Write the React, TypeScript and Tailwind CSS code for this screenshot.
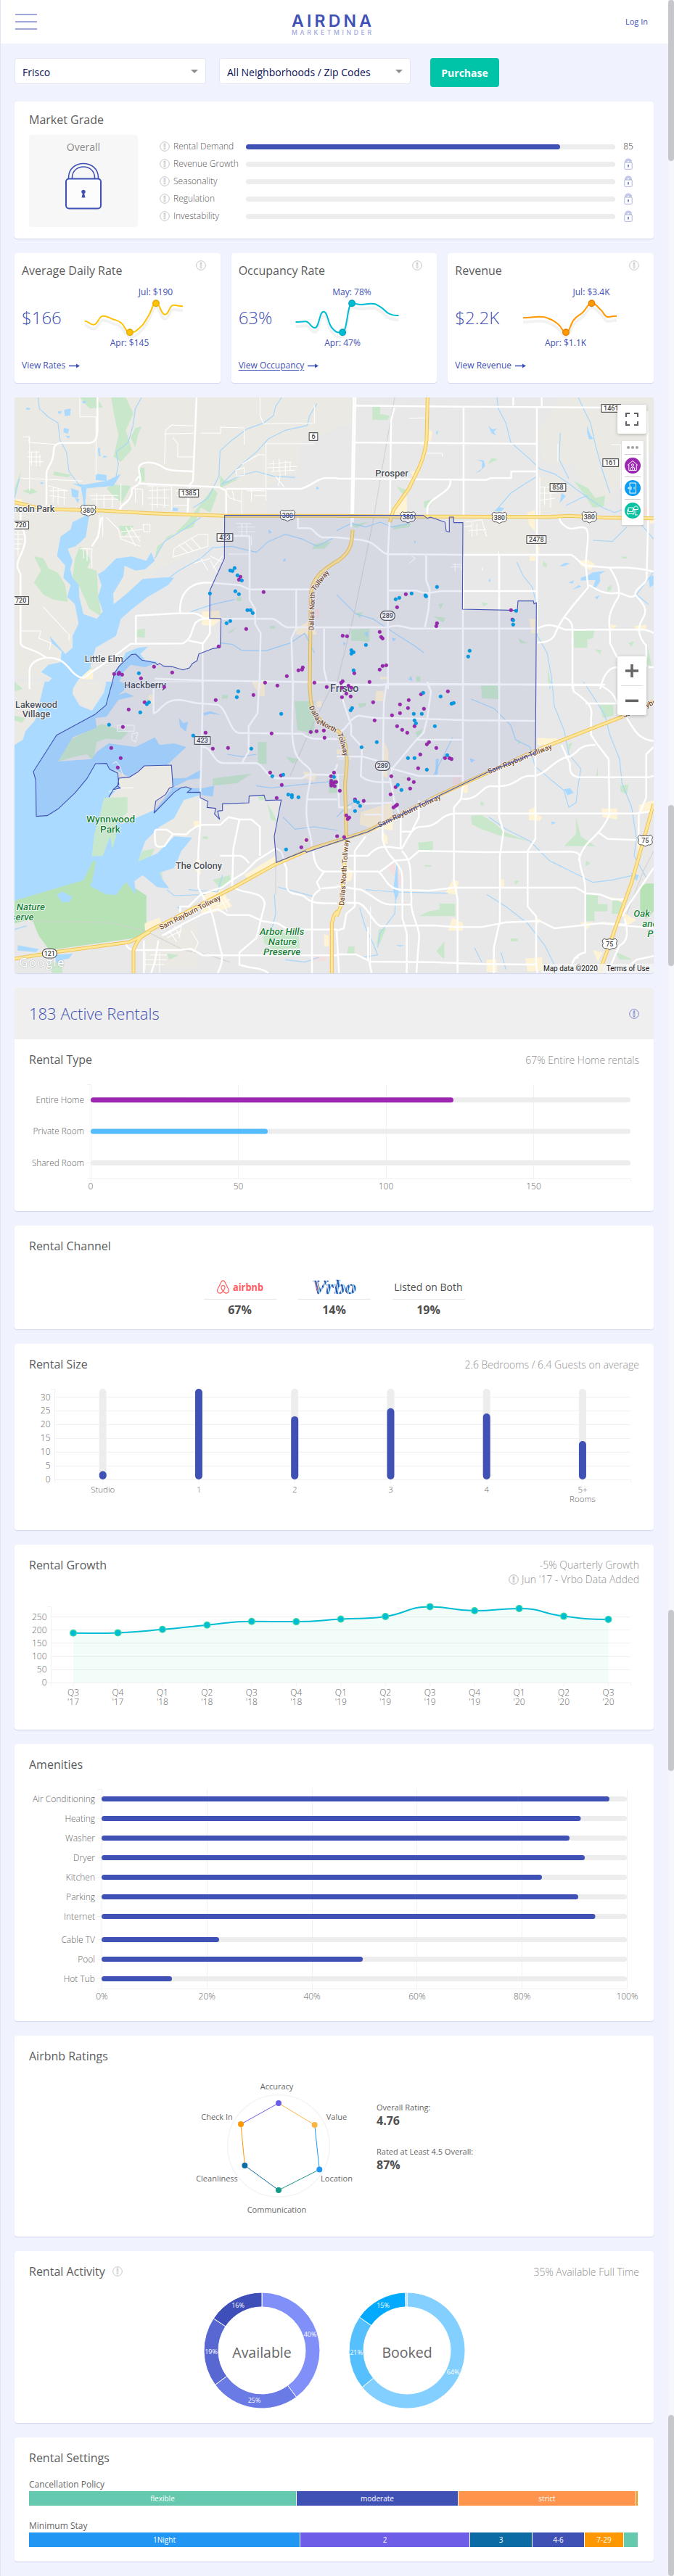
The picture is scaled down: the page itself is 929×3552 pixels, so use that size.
import React from "react";
import { FaAirbnb } from "react-icons/fa";

type Anchor = "start" | "middle" | "end";

function Info({ className = "text-[#c4c4c4]", size = 14 }: { className?: string; size?: number }) {
  return (
    <svg width={size} height={size} viewBox="0 0 14 14" className={className} fill="none" stroke="currentColor">
      <circle cx="7" cy="7" r="6.3" strokeWidth="1" />
      <rect x="6.1" y="5.7" width="1.8" height="5" strokeWidth="0.8" />
      <rect x="6.1" y="3.1" width="1.8" height="1.4" strokeWidth="0.8" />
    </svg>
  );
}

function Card({ className = "", children }: { className?: string; children: React.ReactNode }) {
  return (
    <section className={"flex flex-col overflow-hidden rounded bg-white shadow-[0_1px_1px_#cfd6f0] " + className}>
      {children}
    </section>
  );
}

function CardHeader({ title, note, info }: { title: string; note?: string; info?: boolean }) {
  return (
    <div className="flex h-[56px] shrink-0 items-center justify-between px-5">
      <h2 className="flex items-center gap-[10px] text-[16px] text-[#5c5c5c]">
        {title}
        {info && <Info />}
      </h2>
      {note && <span className="text-[14px] font-light text-[#8f8f8f]">{note}</span>}
    </div>
  );
}

function Label({ x, y, anchor = "middle", size = 12, className = "fill-[#666666] font-light", children }: { x: number; y: number; anchor?: Anchor; size?: number; className?: string; children: React.ReactNode }) {
  return (
    <text x={x} y={y} dy=".35em" textAnchor={anchor} fontSize={size} className={className}>
      {children}
    </text>
  );
}

/* ---------- header ---------- */

function Header() {
  return (
    <header className="flex h-[60px] items-center justify-between bg-white pl-5 pr-[28px]">
      <div className="flex w-[30px] flex-col gap-[8px]">
        <span className="h-[2px] bg-[#9fa8da]" />
        <span className="h-[2px] bg-[#9fa8da]" />
        <span className="h-[2px] bg-[#9fa8da]" />
      </div>
      <svg width="112" height="40" viewBox="0 -6 112 40" className="ml-[1px] mt-[2px] overflow-visible">
        <text x="1" y="20" textLength="110" lengthAdjust="spacing" fontSize="23" className="fill-[#3f51b5] font-semibold" fontFamily="Inter">AIRDNA</text>
        <text x="1" y="31" textLength="110" lengthAdjust="spacing" fontSize="8.6" className="fill-[#9fa8da] font-medium" fontFamily="Inter">MARKETMINDER</text>
      </svg>
      <a className="text-[11px] text-[#3f51b5]">Log In</a>
    </header>
  );
}

function Select({ text }: { text: string }) {
  return (
    <div className="flex h-[36px] w-[264px] items-center justify-between rounded border border-[#e3e6f3] bg-white pl-[10px] pr-[10px]">
      <span className="pt-[3px] text-[14px] text-[#0b1156]">{text}</span>
      <svg width="10" height="5" viewBox="0 0 10 5"><path d="M0 0H10L5 5Z" fill="#8f8f8f" /></svg>
    </div>
  );
}

/* ---------- market grade ---------- */

function SmallLock() {
  return (
    <svg width="12" height="16" viewBox="0 0 12 16" fill="none" stroke="#aeb6de">
      <path d="M1.5 6V4.8C1.5 -.3 10.500 -.3 10.500 4.800V6H7.800V5C7.800 2.500 4.200 2.500 4.200 5V6Z" fill="#c9cfea" strokeWidth=".8" />
      <rect x=".8" y="6" width="10.400" height="9.300" rx=".8" fill="white" />
      <path d="M6 9V12.500" stroke="#5363bd" strokeWidth="1.500" />
    </svg>
  );
}

function MarketGrade() {
  const rows = ["Rental Demand", "Revenue Growth", "Seasonality", "Regulation", "Investability"];
  return (
    <Card className="h-[189px]">
      <div className="flex h-[46px] items-end px-5 pb-[9px] text-[16px] leading-[24px] text-[#5c5c5c]">Market Grade</div>
      <div className="flex pl-5">
        <div className="flex h-[127px] w-[150px] flex-col items-center rounded bg-[#f7f7f7]">
          <span className="mt-[7px] text-[14px] leading-[20px] text-[#8a8a8a]">Overall</span>
          <svg width="52" height="66" viewBox="0 0 52 66" className="mt-[11px]" fill="none" stroke="#3f51b5" strokeWidth="2">
            <path d="M5.500 23V21C5.500 -5 46.500 -5 46.500 21V23M10.500 23V21C10.500 1 41.500 1 41.500 21V23" strokeWidth="1.600" />
            <rect x="2" y="22.500" width="48" height="41" rx="4" fill="#fcfcfc" />
            <path d="M23.500 48.500L24.800 43A2.800 2.800 0 1 1 27.200 43L28.500 48.500Z" fill="#3f51b5" stroke="none" />
          </svg>
        </div>
        <div className="ml-[30px] mt-[4px] flex flex-col">
          {rows.map((r, i) => (
            <div key={r} className="flex h-[24px] items-center">
              <Info />
              <span className="ml-[5px] w-[100px] text-[12px] font-light text-[#555555]">{r}</span>
              <div className="h-[7px] w-[509px] rounded-full bg-[#ededed]">
                {i === 0 && <div className="h-[7px] w-[433px] rounded-full bg-[#3f51b5]" />}
              </div>
              <div className="ml-[11px] flex w-[14px] justify-center text-[12px] font-light text-[#444444]">
                {i === 0 ? "85" : <SmallLock />}
              </div>
            </div>
          ))}
        </div>
      </div>
    </Card>
  );
}

/* ---------- metric cards ---------- */

function smooth(p: number[][]) {
  let d = `M${p[0][0]} ${p[0][1]}`;
  for (let i = 0; i < p.length - 1; i++) {
    const m = (p[i][0] + p[i + 1][0]) / 2;
    const a = p[i - 1] || p[i];
    const b = p[i];
    const c = p[i + 1];
    const e = p[i + 2] || c;
    const t1 = (b[1] - a[1]) * (c[1] - b[1]) > 0 ? (c[1] - a[1]) / (c[0] - a[0] || 1) : 0;
    const t2 = (c[1] - b[1]) * (e[1] - c[1]) > 0 ? (e[1] - b[1]) / (e[0] - b[0] || 1) : 0;
    d += `C${m} ${b[1] + t1 * (m - b[0])} ${m} ${c[1] - t2 * (c[0] - m)} ${c[0]} ${c[1]}`;
  }
  return d;
}

interface Metric {
  title: string; value: string; link: string; underline?: boolean; color: string; ring: string;
  pts: number[][]; lo: [number, number, string, number]; hi: [number, number, string, number]; origin: number;
}

const metrics: Metric[] = [
  {
    title: "Average Daily Rate", value: "$166", link: "View Rates", color: "#ffc107", ring: "#e0a800", origin: 20,
    pts: [[116.7, 441.7], [129, 446.700], [142, 434.700], [155, 439], [167, 444.300], [179, 457.300], [193.700, 450], [204.400, 435], [215, 417.300], [227.500, 432.700], [239, 419.700], [252, 421.300]],
    lo: [179, 457.3, "Apr: $145", 178.5], hi: [215, 417.3, "Jul: $190", 214.5],
  },
  {
    title: "Occupancy Rate", value: "63%", link: "View Occupancy", underline: true, color: "#00bcd4", ring: "#00a3b8", origin: 318.5,
    pts: [[407, 443], [420.600, 442.300], [433.600, 451], [445.500, 428.700], [457, 451], [471.600, 457.300], [484.600, 417.300], [497.600, 419], [511, 417.700], [524, 422.300], [536, 431.700], [549, 434]],
    lo: [471.6, 457.3, "Apr: 47%", 471.5], hi: [484.6, 417.3, "May: 78%", 484.5],
  },
  {
    title: "Revenue", value: "$2.2K", link: "View Revenue", color: "#ff9800", ring: "#e08000", origin: 617,
    pts: [[721, 437.300], [743.500, 435.700], [758, 439], [770, 446.700], [780, 457.300], [791, 440], [803, 430], [816, 417.300], [827.600, 425.700], [838, 436], [850, 434.700]],
    lo: [780, 457.3, "Apr: $1.1K", 779.5], hi: [815.500, 417.3, "Jul: $3.4K", 815],
  },
];

function MetricCard({ m }: { m: Metric }) {
  return (
    <Card className="h-[179px] flex-1">
      <div className="flex items-start justify-between pl-[10px] pr-5 pt-[10px]">
        <h2 className="pt-[2px] text-[16px] leading-[24px] text-[#5c5c5c]">{m.title}</h2>
        <Info />
      </div>
      <div className="flex h-[106px] pl-[10px]">
        <span className="w-[70px] pt-[37px] text-[24px] font-light leading-[32px] text-[#3f51b5]">{m.value}</span>
        <svg width="203" height="106" viewBox={`${m.origin + 80} 384 203 106`} className="shrink-0">
          <path d={smooth(m.pts)} transform="translate(0 6)" fill="none" stroke="#000000" strokeOpacity=".05" strokeWidth="4" />
          <path d={smooth(m.pts)} fill="none" stroke={m.color} strokeWidth="2" />
          {[m.lo, m.hi].map((p) => (
            <circle key={p[2]} cx={p[0]} cy={p[1]} r="4.300" fill={m.color} stroke={m.ring} strokeWidth="1.300" />
          ))}
          <Label x={m.hi[3]} y={402} size={12} className="fill-[#3f51b5]">{m.hi[2]}</Label>
          <Label x={m.lo[3]} y={472} size={12} className="fill-[#3f51b5]">{m.lo[2]}</Label>
        </svg>
      </div>
      <div className="flex items-center gap-[5px] pl-[10px] pt-[5px] text-[12px] leading-[16px] text-[#3f51b5]">
        <span className={m.underline ? "underline underline-offset-2" : ""}>{m.link}</span>
        <svg width="15" height="7" viewBox="0 0 15 7"><path d="M0 3.500H11" stroke="#3f51b5" strokeWidth="1.600" /><path d="M10 .5L15 3.500L10 6.500Z" fill="#3f51b5" /></svg>
      </div>
    </Card>
  );
}

/* ---------- map ---------- */
/* Tile space is three units per pixel; each quarter of the map has its own offset. */

type Quarters = [string, string, string, string];
const offsets = ["translate(0 0)", "translate(1392 0)", "translate(0 1200)", "translate(1392 1200)"];

function Layer({ q, ...rest }: { q: Quarters } & React.SVGProps<SVGPathElement>) {
  return (
    <>
      {q.map((d, i) => (
        <path key={i} d={d} transform={offsets[i]} {...rest} />
      ))}
    </>
  );
}

const tan: Quarters = [
  "M60 24H1395V150L1240 215V320L1100 390V510H930L925 560 860 640 640 740 560 870 470 960 400 1060 330 1180H60Z",
  "M0 24H60V140H0ZM930 24H1311V240L1200 300 1130 450 1060 460 980 300 860 300 830 170ZM530 520H800V670H530ZM840 350H930V520H840Z",
  "M60 0H430L380 120 300 60 240 150 60 262ZM470 350L597 348 709 345 715 435 640 540 530 560 430 480ZM640 520L750 460 820 500V600L640 760ZM600 1020L700 1050 820 980V1180H600Z",
  "",
];

const water: Quarters = [
  "M300 380L335 395 345 460 350 515 300 540 292 570 250 600 236 680 270 720 262 770 292 800 278 850 310 880 325 960 300 1010 300 1060 270 1085 205 1010 215 1040 255 1075 250 1120 200 1130 170 1160 215 1185 175 1230H300L325 1190 370 1150 395 1060 480 1010 500 940 545 900 610 850 695 800 720 770 690 768 590 775 530 830 470 880 468 835 510 765 515 720 560 740 600 735 640 700 625 665 605 700 545 682 480 690 430 740 405 755 420 800 405 850 425 910 400 940 345 920 328 850 326 800 300 770 290 735 300 700 280 650 312 640 330 625 355 600 368 515 352 460 358 400 470 390 500 340 480 350 440 370 350 385ZM457 1230L473 1165 493 1135 520 1080 570 1060 612 1055 580 1085 600 1110 655 1118 600 1140 540 1130 510 1160 480 1230ZM265 75L292 70 290 98 268 102ZM240 82L254 80 252 92 241 90ZM108 66L126 68 122 76 108 74ZM342 38L356 40 352 50 340 46ZM264 150L286 155 280 175 262 168ZM270 182L290 184 284 194ZM405 235L412 232 416 268 408 266ZM398 340L440 345 442 370 395 365ZM294 400L326 410 322 440 298 435ZM310 440L328 444 322 462ZM430 264L446 270 424 274ZM166 372L182 378 170 384ZM1110 570L1124 582 1112 588ZM1170 695L1184 690 1176 706ZM1308 392L1322 400 1308 406ZM714 480L738 482 734 494 714 494Z",
  "M628 140L642 156 664 152 650 166 660 182 640 172ZM575 335L600 320 602 290 580 282 608 284 614 308 592 330ZM1035 140L1050 180 1062 196 1044 198 1036 172ZM930 420L948 432 922 462ZM650 495L672 478 694 482 680 496ZM922 722L944 708 966 710 940 722ZM1010 770L1040 760 1060 748 1088 744 1112 742 1088 756 1090 785 1072 810 1058 818 1070 780 1040 780 1010 782ZM958 790L982 780 976 794ZM975 820L1000 800 1012 806ZM1068 850L1088 842 1076 860ZM1290 770L1310 760V800L1295 810ZM228 1018L246 1022 234 1034ZM114 1000L130 990 128 1016ZM26 1036L38 1040 30 1052ZM628 780L638 772 634 790ZM296 1192L308 1176 314 1196ZM320 616L328 622 322 630ZM410 168L420 160 416 180Z",
  "M185 0L170 60 145 160 105 205 95 240 60 262V905L350 820 372 845 440 880 480 882 520 828 562 880 556 825 590 800 650 850 700 855 670 815 660 790 720 770 750 700 795 645 720 640 650 710 570 745 600 660 660 600 720 565 760 490 830 468 880 475 886 430 840 440 790 440 750 438 716 437 780 405 830 400 834 362 770 398 716 400 690 345 770 270 720 255 660 262 640 230 560 270 450 255 400 290 380 320 240 330 300 230 400 190 395 150 440 145 490 75 555 60 520 45 490 55 530 20 500 0H440L430 45 380 120 330 100 300 50 305 0ZM740 150L758 172 778 165 768 206 744 186ZM840 130L870 122 915 138 870 132 846 140ZM74 1090L160 1106 150 1118 72 1112ZM225 1130L300 1125 285 1145 260 1150 250 1170 225 1155ZM730 935L750 925 745 940ZM235 880L260 870 298 890 285 912 255 910Z",
  "M410 320L422 318 418 380 408 390ZM550 315L572 325 556 335ZM888 578L908 582 890 592ZM234 860L250 740 256 880 244 905ZM940 445L965 440 980 460 955 470ZM1215 790L1250 800 1262 770 1240 825ZM245 1090L280 1090 260 1096Z",
];

const streams: Quarters = [
  "M158 24L163 70 200 105 240 130 248 200 275 250 285 330 330 390M585 24L560 70 550 140 530 210 480 250 490 300 480 350M1165 24L1140 60 1130 100 1090 130 1020 155 960 200 910 245 905 350 860 440 800 480M1310 50L1280 100 1270 140 1180 160 1110 195 1060 250 1000 300 915 385M915 385L1000 345 1060 330 1130 350 1220 355M640 690L680 620 760 570 830 520M700 770L740 740 830 690 880 645 960 640 1060 665 1110 620 1180 590 1250 610 1310 640 1390 600M790 910L880 880 970 860M912 1040L960 1045 1000 1070 1100 1072 1200 1040 1260 1000 1300 1080M60 440L80 360",
  "M0 575L60 545 120 560 180 540 230 560 300 545M663 24L668 70 700 130 720 210 800 280 840 320 900 340 960 380 1040 440 1100 480 1150 500 1200 480 1311 610M1000 24L1020 70 1050 130 1070 220 1100 330 1130 420M660 490L720 420 780 380 830 350M925 170L920 280 960 360M950 470L1010 440 1040 430M745 705L770 760 810 810 830 900 830 1010 870 1080 890 1190 880 1230M0 840L80 920 150 940 240 1000 320 1050 360 1080M1060 615L1140 620 1200 560M1311 745L1240 840 1290 880",
  "M940 300L1000 310 1060 300M1060 430L1120 440 1200 430 1395 410M1170 560L1220 610 1300 600 1395 615M1135 880L1140 960 1120 1040M1150 850L1230 870 1300 890M780 860L900 870 920 800M1180 1150L1260 1160 1320 1140M60 1025L110 1010M850 880L720 885 690 860",
  "M556 72L650 110 720 180 740 240 800 270 820 350 880 400 940 450 960 520 990 500 1000 420 1010 360 960 300 940 200 900 100 890 0M1020 0L1060 60 1110 140 1130 220 1170 320 1180 420 1220 520 1240 650 1230 720 1280 810M630 560L700 610 800 660 880 740 960 780 1060 830 1140 820 1230 800M620 880L700 930 790 1000 860 1090 905 1180M245 880L240 960 180 1040 170 1100M120 860L240 870 460 875M95 935L120 1020 150 1080 170 1130 110 1140M0 560L50 510 80 495M400 390L440 310 480 230M570 1100L600 1160M680 1120L700 1190",
];

const parks: Quarters = [
  "M330 24H400L425 65 370 70ZM460 24H520L552 90 520 160 545 240 500 290 470 270 490 180 470 90ZM560 150L585 145 570 180 560 230 540 190ZM575 315H598V372L570 365ZM470 385L540 390 530 410 505 460 478 440 440 400ZM94 410L130 400 155 415 125 425ZM90 320L60 400V430L78 370ZM140 680L180 690 200 730 240 750 270 800 280 870 220 860 180 840 140 790 170 740ZM330 640L355 660 375 700 360 730 400 740 405 830 420 930 370 900 330 810 300 770 310 690ZM570 985L600 980 598 1018 562 1015ZM880 400L900 420 870 500 830 480 800 560 740 580 690 600 640 690 650 640 720 590 770 540ZM980 850H998V866H978ZM1300 630L1370 620 1340 650 1290 650ZM910 345L930 370 990 360 910 400ZM940 1000L975 975 960 995ZM1115 970H1138V980H1115ZM340 1185L380 1145 360 1120 340 1130ZM225 330L295 345 280 355 220 345ZM490 555H555L510 600Z",
  "M148 62H180V92L220 100 210 118 148 116ZM248 392L285 405 275 428ZM360 455L410 440 380 480 362 482ZM625 300L640 275 668 280ZM980 370L1040 400 1070 440 1110 430 1105 475 1060 480 1020 420ZM60 985L136 980V1034L60 1030ZM980 990L1066 988 1060 1020 1036 1025V1060H982ZM1120 810L1138 798 1134 822 1120 828ZM855 700L870 715 866 728 852 720ZM600 870L628 878 606 888ZM400 930L450 935 440 955ZM420 880L442 875 430 900ZM230 555L310 545 300 560 236 570ZM60 550L130 540 80 565ZM1066 1066L1095 1068 1090 1086ZM1205 1040L1230 1032 1220 1055ZM1285 1050L1303 1135 1285 1130ZM750 1020L790 1040 760 1040ZM328 1178H346V1200H330ZM872 1140L885 1200 875 1210ZM80 915L108 912 96 938ZM598 1216H668V1230H598ZM1180 682H1200V690H1180Z",
  "M60 905L350 820 385 740 397 745 380 830 372 845 440 880 520 828 605 885V1020L590 1055 205 1110 160 1050 132 980 60 1000ZM430 480L527 478V540L470 600 480 640 465 690 455 640 425 720 380 722 390 630 410 560ZM240 330L290 240 420 175 530 210 500 240 440 235 400 250 385 330 360 300 310 310ZM1218 80H1300V215L1230 200ZM1066 250H1102V340H1066ZM880 820L950 800 955 825 910 855ZM1090 1020L1235 1050 1240 1100 1130 1110 1090 1080ZM1105 500L1148 580 1120 570ZM560 755L590 700 640 690 620 730ZM630 770L670 790 675 830ZM60 0L95 30 60 40ZM60 140L105 150 90 170 60 160ZM205 1160H258V1205H215ZM880 400L1040 380 980 420 880 430ZM1180 310L1240 320 1210 340ZM1360 400H1395V460H1360ZM838 640H860V650H838ZM690 1125L740 1130 700 1150ZM1070 475H1095V490H1070ZM918 55H942V70H918Z",
  "M598 14H670V72L600 68ZM555 555L600 552 660 590 690 620 740 640 800 660 670 635 600 610 560 590ZM990 560L1010 640 1070 680 940 680 990 630ZM338 665L398 660V698H340ZM425 918H490V970H340L380 950 425 942ZM1032 880L1080 885V920L1120 920V950H1066V990H1030ZM1140 905H1180V960L1138 960ZM1088 95H1145V140L1100 150ZM1172 430L1208 425 1200 465 1175 455ZM175 1025L205 1020 180 1080 165 1090ZM445 1075V1150L412 1115ZM50 1095H74V1125H42ZM720 1062H748V1074H720ZM325 210L356 195 340 240ZM88 90L122 88 120 100 95 110ZM1080 350V390H1072ZM955 260L975 250 960 290ZM750 240L762 250 750 260ZM1030 740L1050 750 1030 765ZM735 825L755 822 740 840ZM364 758H390V766H364ZM595 498H608V512H595ZM1150 1115L1225 1150 1170 1150ZM265 395L310 398 300 405Z",
];

const deepPark: Quarters = ["", "", "M60 905L350 820 372 845 440 880 520 828 605 885V1020L590 1055 205 1110 160 1050 132 980 60 1000Z", "M1255 850L1280 835H1311V950L1280 980 1255 960Z"];

const town: Quarters = [
  "M836 910L905 905 915 940 880 970 835 965ZM1225 980L1290 940 1310 1005H1225ZM340 1150H385V1190H340ZM65 445H90V465H65Z",
  "M378 155L395 165 390 205 345 225 370 190ZM245 460L290 430 292 512H210ZM790 500L820 488V578L795 550ZM1000 700L1040 695 1068 715 1050 738 1010 720ZM798 680H822V700H798ZM796 940H822V1000H805ZM1130 962L1160 968 1140 985ZM1230 970L1280 965V985H1240ZM828 640H838V670H828ZM305 330H345L320 360ZM180 1180H210V1190H180ZM1295 520H1311V545H1295Z",
  "M1040 0H1095V60H1075ZM1255 370L1310 380 1300 412 1258 400ZM802 575H830V600H802ZM812 730L830 740V800L808 780ZM1010 800L1140 720 1150 750 1030 820ZM840 880L920 860 960 930 900 950 830 960ZM598 1000L660 975 670 1010 600 1040ZM1340 1045L1360 1050V1095H1340ZM1256 645H1275V665H1256ZM1310 80H1330V105H1310ZM615 55H632V90H615Z",
  "M100 540L225 500 235 560 170 615 95 590ZM195 240L215 290 210 400 190 390ZM200 540L235 560 230 615 195 610ZM162 38H195V80H160ZM830 232L915 235 900 265 830 262ZM522 425H542V460H525ZM795 530L820 520V545L850 560 840 575 795 572ZM1095 525H1160V570L1100 560ZM1250 510L1311 490V540H1250ZM480 820L505 825 495 880 450 875ZM675 815L692 820V850H675ZM480 975L500 990 522 995V1030H460ZM620 1150L660 1148 665 1200H620ZM780 1145L850 1140V1195L790 1200ZM1005 995H1060L1035 1025ZM1180 955L1210 970 1240 985 1200 1010ZM1130 890L1185 900V915ZM1240 660L1260 665 1250 740ZM820 975L845 985 830 1005ZM40 760L66 790 60 820 40 830ZM190 620L210 640V670H195ZM1060 1110L1100 1120 1080 1160ZM0 280H50V300H0Z",
];

const pinkLand: Quarters = [
  "M1300 900H1320V935H1300Z",
  "M1270 478H1295V510H1270Z",
  "M1290 1130H1350V1155H1290Z",
  "M205 760L235 750 255 790 240 805ZM255 795H270V840H255ZM480 395L513 390 510 420 480 435ZM275 912H290V922H275Z",
];

const minor: Quarters = [
  "M330 24V104H397V345M122 185V410M95 187H120V210L230 218M116 250H165M112 270H170M120 290H180M130 250V305M150 245V310M165 260V310M88 358L340 370M200 390L280 410M205 410H280M205 430L275 440M220 395V460M240 400V465M265 405V470M370 430H490M380 445H490M400 420V475M430 425V480M465 430V480M540 400L590 405V470M560 400V460M610 390H710V490M630 390V490M650 395V480M680 400V480M615 410L705 405M610 440H700M620 465L700 470M725 410H775V470H720M730 430H775M925 400L950 440 1000 455M960 410L970 450M1000 405V510M1040 405V455M1020 410H1100V450M1050 430H1100M1100 400V215H1300M1010 155V220M1075 24V100L1090 133 1300 130V55M680 300L685 160 710 138 800 142M680 175L800 172M715 190L735 215 735 270H800M830 172H912V147L1010 150M1110 300L1205 290M1105 315L1230 310M1120 330L1220 325M1130 285V330M1155 280V335M1180 285V345M1200 290V330M1140 350L1175 395M1160 340L1150 390M975 325L1010 315V345L980 350ZM1000 300L1070 260 1098 262M410 510V590M425 515V600M440 520L490 570 500 610 580 640M500 580L590 570M520 560L560 640M540 560L580 620M500 600L580 600M592 550H620V580H595ZM330 650H380V730M345 650V690M360 650V700M720 650L820 590H860V640L715 685ZM740 635L780 670M760 620L800 660M790 605L830 650M800 710L870 690M830 690L860 740M870 680L930 710M880 730L920 680M870 700L900 750M975 545H1040M980 560H1055M985 580H1055M1000 545V595M1020 545V590M1040 600V635M945 672H1030M178 890L280 1000M90 990H170L160 1020 210 1040 205 1070M65 575H100M60 590H95M60 610H95M60 630H90M60 650H85M75 580V680M285 1000V1030M500 380V490",
  "M300 110L365 108M370 255H437V270M525 560L560 555M530 540L600 530 620 600M545 575L620 570M560 540V600M580 545V595M840 395H905M835 420H910M840 450L905 440M860 395V470M885 390V480M840 355V510M480 715H515V740M470 725H510M490 710V745M310 680L325 690 300 710M670 660V680M602 730V740M1135 220H1175V400M915 215V290",
  "M500 0V0M640 0H835M545 215L570 210 560 250 545 240ZM485 180H555V205H485ZM465 340L480 330 495 350 510 390M450 455L500 440 553 438M660 1120V1205M600 1120V1190M620 1130H690M600 1150H690M600 1170H680M680 1050L750 1010 740 1060M700 1030L730 1075M720 1010L745 1055M690 1060L750 1030M790 1030L820 1080 800 1120M915 900L940 950M925 890L950 930M900 930L950 900",
  "M0 385H30M5 320H60M140 930V1200",
];

const rail: Quarters = ["", "M240 24L200 250 150 540 70 930 0 1210", "M132 990L450 996 600 1030 760 1110 860 1130 950 1160M1140 720V880M1380 0L1260 250 1200 390", "M1311 700L1270 780 1200 960"];

const roads: Quarters = [
  "M403 24V160Q402 212 370 212H250Q222 215 222 245C222 300 192 310 192 340V470M813 24L798 370L785 385L775 505M495 490C500 460 530 470 545 420C540 390 560 400 575 380C590 360 570 340 575 310C590 285 640 290 670 310C700 335 760 325 800 330M570 380L905 395L935 410V512M560 370L575 350M935 402H1245C1290 390 1310 360 1345 358H1395M85 500V540C120 620 100 640 75 700C65 740 85 740 85 760V1040C90 1065 140 1060 190 1100C240 1100 260 1110 300 1160C330 1190 350 1190 370 1165C440 1120 480 1090 540 1043L755 1042C800 1020 790 980 810 955Q830 935 868 940M122 1230V1150Q130 1110 190 1100M562 1040V927L730 917H800C830 915 840 950 868 935M745 915C740 850 770 790 860 790L990 800L1030 818H1290M868 935V1000Q850 1030 838 1042V1230M780 1030L838 1042M1395 603H1330C1290 580 1300 565 1270 565H1232V515M1395 975H1185C1150 960 1150 940 1120 940H915M1032 595V860L1055 900V960L1078 1000L1072 1230M1225 820V980L1205 1020L1212 1230M1340 980V1150L1352 1200M1350 975H1395M640 1187L838 1195L1395 1203M955 597H1032M380 640L405 600 420 520",
  "M70 24L60 560M78 24L68 540M70 58L500 62L1110 66M730 24V58M848 24V60M76 210L830 216M240 60L225 120 220 500M0 360L620 365L635 358H722V330H825M525 60V520M470 365C480 420 390 430 375 480V510M828 66V1000M0 603C60 610 120 610 150 630C190 660 190 670 215 672L520 675H970C1000 690 1000 710 1030 720M220 510L212 670V970M215 823H330C370 840 400 830 430 825H825M370 675V780L385 820 380 900 365 975M0 975H210C260 960 280 975 310 980H830C870 960 890 965 920 975L945 985H1270Q1300 990 1311 1000M522 675V1210M672 675V1230M212 970V1230M0 1212H1110M830 1038Q880 1040 900 1010C930 930 1000 860 1040 810L1030 720C1030 670 1050 580 1030 565C1000 550 980 580 950 560Q920 540 922 520M1030 720L1130 728C1200 725 1260 730 1311 745M1130 730C1170 790 1170 830 1165 850C1120 920 1125 950 1130 985V1040L1160 1100M1045 800C1090 830 1120 840 1165 832C1200 840 1220 860 1235 840C1230 810 1290 800 1282 760L1288 540 1285 80M1235 840C1270 880 1290 900 1265 940C1240 980 1250 1020 1280 1050V1140M945 935Q975 950 975 980V1230M1311 1140H1290M1090 1230Q1110 1140 1160 1140M375 1210L385 1230",
  "M838 0V90L828 480V590L820 700V850C840 900 870 930 880 970L910 1100Q930 1150 900 1205M635 0V130C660 130 670 75 740 75C790 80 800 92 838 90L900 95C940 110 950 212 990 212L1250 215C1290 250 1340 230 1395 238M1072 0L1065 130L1028 185V290L1000 335M1212 0L1208 200C1210 350 1270 330 1285 370C1290 420 1260 460 1268 560C1270 620 1290 620 1290 700M838 270C880 270 880 340 930 337H1060C1090 340 1100 400 1150 400H1250Q1270 380 1290 385H1360Q1390 370 1395 340M1270 487H1395M640 620C640 680 640 690 680 680L715 630L690 612H645ZM715 630L770 632Q810 590 850 592H910L945 560L990 570H1040L1075 600V720M990 570L965 690 960 850M745 955V930H780L830 880L920 850L960 820L1010 790L1060 740L1140 690M910 720H990C1010 720 1020 740 1030 750M1140 690C1180 700 1165 740 1185 770V850C1200 890 1230 870 1260 890C1290 920 1320 915 1395 917M1295 700C1300 760 1320 780 1340 785H1395M1340 785L1310 830 1325 860M1325 860C1290 880 1290 900 1290 920V1205M1330 855L1395 850M520 1085Q530 1110 560 1110H740L790 1105L840 1132H1395M595 1070V1205M655 1070L640 1160 625 1205M670 1050L760 1000L840 960L900 940L940 965H1030L1085 990L1150 1000L1190 1025H1395M965 850C1000 880 1090 860 1095 920L1075 1000L1060 1060 990 1120V1170C1040 1190 1080 1180 1110 1205M0 0",
  "M0 212C50 200 40 160 90 140L160 150L330 152L540 160L822 162M0 10L180 15L210 8L820 12L1090 15C1140 40 1150 60 1160 90L1200 150C1230 200 1250 240 1311 245M375 0L390 40 375 150 360 210 330 240 230 360 220 400 240 500 265 560V690M522 0V440M672 0V560L690 620 675 720V990L650 1100V1205M205 15L195 90 190 400V650Q200 700 240 740C280 790 270 800 272 860V980L290 1040V1205M522 240H330M0 310H110L180 330L230 360L340 390H520M20 0L20 60 60 180V220L105 270 100 390Q130 420 220 415M5 380L10 520H60M115 550H190M115 505L230 500M120 640L75 700V930L40 960 30 1020 0 1030M40 720H130C180 660 230 690 270 690C300 640 310 600 350 600C430 600 420 550 490 545H1240L1311 535M265 620H310L340 560V490M270 700C320 750 300 800 310 900C300 960 350 1020 340 1070L330 1205M175 790L240 740 300 735 340 700L620 705L970 703Q1000 705 1005 720C1000 780 1030 800 1028 860V1120Q980 1130 970 1180V1205M0 785H170C200 800 200 850 260 860L380 865 480 852H990L1030 875 1090 880 1140 900 1200 900M0 845L100 860C160 890 180 920 220 922H310M40 915H90C130 930 150 1000 180 1010L400 1008L490 1015H600L700 995L840 990L900 1020L1100 998L1200 1005M520 485C590 490 600 430 640 432C760 440 740 380 820 390C870 380 900 320 960 310C1000 300 990 260 1070 262M970 310L945 310M930 262L965 340Q960 390 1000 395H1290L1311 390M822 300V650L790 700V930L825 970V1170L830 1205M975 0L980 40C1050 90 1060 110 1052 150V220L1080 262L1125 320L1128 550C1080 660 1030 640 1000 740M1030 90H1155M1311 270L1280 300V480L1250 550L1248 650M1085 625L1120 650L1240 655M520 440L515 485L485 520V820L500 900V1205M0 1128H80L140 1158L400 1160L600 1168L820 1170M130 1015V1140L145 1205M1311 770L1210 920L1180 970M1190 980C1210 1040 1200 1080 1170 1090L1120 1205M980 1145L1000 1140M1311 1135L1240 1150L1180 1200M0 1030L10 1205M1100 1000L1311 1020",
];

const highways: Quarters = [
  "M60 458C130 470 140 485 230 487L420 492L620 503L930 514H1392M1281 1230L1285 840C1290 760 1350 730 1395 700",
  "M0 514L230 516L880 518L960 514L1100 521L1311 524M376 24L372 200C360 300 320 350 300 400L235 490L220 540M0 704C50 670 65 640 66 572",
  "M60 1146L230 1118L530 1078C590 1060 600 1030 680 1000L965 852L1130 760L1290 690L1395 658M552 1205V1110C570 1060 590 1050 620 1035M1280 0L1285 80C1300 160 1350 180 1395 205M1372 1205V1000Q1380 960 1395 950",
  "M0 660L130 617L420 470L822 285L1180 145L1311 80M0 200C30 220 40 260 42 320C45 370 30 400 36 470L40 650L20 920L0 970M1311 505L1220 830L1120 1110L1085 1205",
];

const city =
  "M929 512H1750L1767 524 1780 519 1840 540 1845 577 1858 581V519H1875L1877 542H1914L1912 900 2139 905 2142 866H2206L2208 878 2218 873 2216 1230 2214 1495 2022 1572 1822 1668 1567 1798 1522 1820 1392 1863 1268 1906 1262 1900 1143 1948 1134 1840 1163 1689 1098 1691 1092 1669 1030 1673 1029 1701 920 1705V1733L900 1735 908 1769 887 1747 892 1724 856 1720 860 1695 828 1680V1657L774 1658 791 1643 770 1635 750 1638 720 1658 637 1743 644 1694 684 1667 700 1640 715 1635 709 1545 597 1548 573 1571 535 1595 492 1599 486 1632 498 1640 468 1646 451 1676 468 1646 491 1625 487 1578 453 1562 441 1538 395 1539 360 1600 310 1660 243 1724 195 1754 150 1757 148 1608 138 1572 234 1421 392 1336 438 1297 465 1200 473 1165 493 1135 543 1088 561 1086 587 1111 643 1122 650 1130 660 1124 675 1135 712 1138 757 1151 783 1143 796 1124 815 1113 822 1085 880 1063 911 1058 914 939 867 938 868 822 928 690Z";

const homes: number[][][] = [
  [[994, 766], [988, 778], [1090, 829], [1018, 982], [904, 1054], [472, 1168], [493, 1163], [490, 1168], [505, 1171], [637, 1138], [583, 1186], [712, 1162], [679, 1222], [1252, 1141], [1249, 1150], [1234, 1153], [1186, 1177], [1096, 1204], [1147, 1216], [1300, 1204], [1351, 1222]],
  [[286, 838], [250, 892], [415, 958], [412, 970], [721, 904], [727, 943], [178, 994], [184, 1015], [190, 1021], [25, 1010], [43, 1012], [205, 1132], [190, 1135], [178, 1150], [73, 1165], [136, 1201], [25, 1198], [19, 1204], [22, 1225], [49, 1217], [61, 1225]],
  [[598, 85], [532, 115], [508, 187], [460, 274], [499, 316], [487, 355], [892, 76], [1048, 55], [850, 211], [880, 277], [943, 274], [1123, 214], [1285, 208], [1309, 205], [1339, 202], [1342, 232], [1117, 376], [1162, 388], [1165, 427], [1144, 481], [1381, 376], [1369, 391], [1267, 655], [1246, 685], [1370, 410], [1369, 420], [1384, 415], [1384, 432], [1370, 430], [1376, 423]],
  [[40, 49], [22, 64], [58, 61], [151, 85], [157, 160], [229, 139], [262, 94], [298, 76], [295, 109], [262, 130], [349, 52], [361, 112], [460, 40], [250, 184], [271, 199], [292, 211], [322, 184], [382, 250], [373, 259], [412, 274], [346, 301], [448, 316], [466, 316], [475, 320], [337, 358], [226, 391], [298, 403], [319, 415], [304, 442], [244, 436], [223, 466], [250, 509], [244, 514], [235, 520], [13, 451], [76, 487], [112, 493], [40, 553], [52, 562], [46, 568], [2, 639], [31, 643], [-2, 415]],
];
const rooms: number[][][] = [
  [[970, 730], [952, 740], [961, 742], [982, 760], [1000, 781], [868, 835], [973, 826], [988, 838], [1023, 904], [1036, 904], [1045, 916], [952, 949], [937, 958], [574, 1165]],
  [[415, 808], [310, 835], [259, 853], [244, 859], [367, 843], [370, 847], [742, 907], [730, 946], [730, 964], [121, 1048], [61, 1070], [70, 1078], [61, 1084], [70, 1153], [550, 1072], [544, 1096]],
  [[985, 40], [979, 64], [616, 85], [607, 93], [580, 127], [451, 178], [799, 223], [1163, 133], [1039, 277], [1126, 391], [1171, 385], [1381, 394], [1192, 467], [1207, 469], [1207, 478], [1234, 478], [1183, 694]],
  [[358, 46], [430, 61], [475, 91], [484, 88], [319, 133], [352, 133], [322, 160], [328, 172], [406, 184], [64, 109], [58, 118], [166, 250], [103, 271], [295, 316], [322, 316], [457, 304], [373, 364], [253, 427], [268, 448], [76, 493], [88, 499], [97, 514], [76, 535]],
];

function Sign({ x, y, text, kind = "rect" }: { x: number; y: number; text: string; kind?: "rect" | "oval" | "us" }) {
  const w = kind === "rect" ? 20 + text.length * 15 : 60;
  const h = kind === "rect" ? 32 : 38;
  return (
    <g>
      {kind === "us" ? (
        <path d={`M${x - 24} ${y - 22}Q${x - 14} ${y - 16} ${x} ${y - 21}Q${x + 14} ${y - 16} ${x + 24} ${y - 22}L${x + 31} ${y - 14}Q${x + 24} ${y - 2} ${x + 30} ${y + 6}Q${x + 28} ${y + 20} ${x + 12} ${y + 18}L${x} ${y + 24}L${x - 12} ${y + 18}Q${x - 28} ${y + 20} ${x - 30} ${y + 6}Q${x - 24} ${y - 2} ${x - 31} ${y - 14}Z`} fill="white" stroke="#555555" strokeWidth="3" />
      ) : (
        <rect x={x - w / 2} y={y - h / 2} width={w} height={h} rx={kind === "oval" ? 19 : 1} fill="white" stroke="#555555" strokeWidth="3.500" />
      )}
      <text x={x} y={y + 10} textAnchor="middle" fontSize="27" className="fill-[#444444] font-medium">{text}</text>
    </g>
  );
}

function Place({ x, y, text, size = 38, park, italic, anchor = "middle", rotate = 0, color, length }: { x: number; y: number; text: string; size?: number; park?: boolean; italic?: boolean; anchor?: Anchor; rotate?: number; color?: string; length?: number }) {
  return (
    <text
      x={x} y={y} textAnchor={anchor} fontSize={size} fill={color ?? (park ? "#188038" : "#4a4f57")} stroke="white" strokeWidth="5"
      strokeLinejoin="round" paintOrder="stroke" fontStyle={italic ? "italic" : "normal"} textLength={length}
      transform={rotate ? `rotate(${rotate} ${x} ${y})` : undefined} className="font-medium"
    >
      {text}
    </text>
  );
}

function MapCanvas() {
  const toll = "#7a4b1c";
  return (
    <svg width="881" height="794" viewBox="60 24 2643 2382" fontFamily="Roboto" className="block" strokeLinejoin="round">
      <rect x="60" y="24" width="2643" height="2382" fill="#e8e8e8" />
      <Layer q={tan} fill="#ebe9e4" />
      <Layer q={parks} fill="#c9e8cb" />
      <Layer q={deepPark} fill="#b6e2b6" />
      <Layer q={town} fill="#fff3d6" />
      <Layer q={pinkLand} fill="#f8dcdc" fillOpacity=".7" />
      <Layer q={water} fill="#aadaff" />
      <path d="M470 1560L535 1595 597 1548H709L715 1635 690 1670 640 1730 560 1765 500 1790 470 1740 440 1690 495 1635 487 1580Z" fill="#ebe9e4" />
      <path d="M430 1680L527 1678V1740L470 1800 480 1840 465 1890 455 1840 425 1920 380 1922 390 1830 410 1760Z" fill="#c9e8cb" />
      <path d="M345 2020L385 1940 397 1945 380 2030 372 2045Z" fill="#b6e2b6" />
      <path d="M235 2080L260 2070 298 2090 285 2112 255 2110Z" fill="#aadaff" />
      <Layer q={streams} fill="none" stroke="#a5d6fb" strokeWidth="3.500" />
      <Layer q={rail} fill="none" stroke="#cfcfcf" strokeWidth="3" />
      <Layer q={minor} fill="none" stroke="white" strokeWidth="3.200" />
      <Layer q={roads} fill="none" stroke="white" strokeWidth="7.500" />
      <Layer q={highways} fill="none" stroke="#f0c355" strokeWidth="15" />
      <Layer q={highways} fill="none" stroke="#ffe799" strokeWidth="9" />

      <Sign x={365} y={491} text="380" kind="us" />
      <Sign x={1189} y={512} text="380" kind="us" />
      <Sign x={1687} y={519} text="380" kind="us" />
      <Sign x={2065} y={521} text="380" kind="us" />
      <Sign x={2437} y={519} text="380" kind="us" />
      <Sign x={2668} y={1857} text="75" kind="us" />
      <Sign x={2521} y={2285} text="75" kind="us" />
      <Sign x={1296} y={186} text="6" />
      <Sign x={781} y={420} text="1385" />
      <Sign x={86} y={552} text="720" />
      <Sign x={86} y={864} text="720" />
      <Sign x={930} y={603} text="423" />
      <Sign x={837} y={1443} text="423" />
      <Sign x={2527} y={69} text="1461" />
      <Sign x={2525} y={294} text="161" />
      <Sign x={2307} y={396} text="858" />
      <Sign x={2218} y={612} text="2478" />
      <Sign x={1603} y={927} text="289" kind="oval" />
      <Sign x={1582} y={1548} text="289" kind="oval" />
      <Sign x={205} y={2324} text="121" kind="oval" />

      <Place x={54} y={497} text="ncoln Park" anchor="start" length={172} />
      <Place x={430} y={1118} text="Little Elm" />
      <Place x={600} y={1227} text="Hackberry" />
      <Place x={150} y={1307} text="Lakewood" size={38} />
      <Place x={150} y={1346} text="Village" size={38} />
      <Place x={1620} y={350} text="Prosper" size={39} />
      <Place x={822} y={1973} text="The Colony" />
      <Place x={1424} y={1241} text="Frisco" size={43} length={118} />
      <Place x={458} y={1782} text="Wynnwood" size={41} park />
      <Place x={456} y={1824} text="Park" size={41} park />
      <Place x={127} y={2145} text="Nature" size={40} park italic />
      <Place x={92} y={2187} text="serve" size={40} park italic />
      <Place x={1166} y={2247} text="Arbor Hills" size={40} park italic />
      <Place x={1168} y={2289} text="Nature" size={40} park italic />
      <Place x={1166} y={2331} text="Preserve" size={40} park italic />
      <Place x={2620} y={2171} text="Oak" size={40} park italic anchor="start" />
      <Place x={2656} y={2213} text="and" size={40} park italic anchor="start" />
      <Place x={2677} y={2255} text="Pr" size={40} park italic anchor="start" />
      <Place x={665} y={2227} text="Sam Rayburn Tollway" size={30} anchor="start" rotate={-27} color={toll} length={280} />
      <Place x={1568} y={1803} text="Sam Rayburn Tollway" size={30} anchor="start" rotate={-25} color={toll} length={283} />
      <Place x={2022} y={1582} text="Sam Rayburn Tollway" size={30} anchor="start" rotate={-22} color={toll} length={283} />
      <Place x={2580} y={1350} text="Sam Raybu" size={30} anchor="start" rotate={-24} color={toll} />
      <Place x={1297} y={988} text="Dallas North" size={29} anchor="start" rotate={-88} color={toll} length={158} />
      <Place x={1302} y={826} text="Tollway" size={29} anchor="start" rotate={-52} color={toll} />
      <Place x={1277} y={1306} text="Dallas" size={29} anchor="start" rotate={62} color={toll} />
      <Place x={1321} y={1376} text="North" size={29} anchor="start" rotate={28} color={toll} />
      <Place x={1396} y={1415} text="Tollway" size={29} anchor="start" rotate={74} color={toll} />
      <Place x={1423} y={2127} text="Dallas North Tollway" size={30} anchor="start" rotate={-86} color={toll} length={275} />

      <path d={city} fill="#3f51b5" fillOpacity=".1" stroke="#4353b4" strokeWidth="3.300" />
      {homes.map((g, i) => (
        <g key={i} transform={offsets[i]} fill="#9c27b0" stroke="#7b1f92" strokeWidth="1.500">
          {g.map(([x, y]) => <circle key={`${x}-${y}`} cx={x} cy={y} r="7" />)}
        </g>
      ))}
      {rooms.map((g, i) => (
        <g key={i} transform={offsets[i]} fill="#039be5" stroke="#0286cc" strokeWidth="1.500">
          {g.map(([x, y]) => <circle key={`${x}-${y}`} cx={x} cy={y} r="7" />)}
        </g>
      ))}
      <text x="78" y="2379" fontSize="51" fill="white" stroke="#b4bcb8" strokeWidth="3" paintOrder="stroke" textLength="188" className="font-medium" fontFamily="Open Sans">Google</text>
    </svg>
  );
}

function MapPanel() {
  return (
    <div className="relative h-[794px] w-[881px] overflow-hidden rounded shadow-[0_1px_1px_#cfd6f0]">
      <MapCanvas />
      <div className="absolute right-[10px] top-[10px] flex h-[40px] w-[40px] items-center justify-center rounded-[2px] bg-white shadow-[0_1px_4px_rgba(0,0,0,0.25)]">
        <svg width="18" height="18" viewBox="0 0 18 18" fill="none" stroke="#606060" strokeWidth="2"><path d="M1 6V1H6M12 1H17V6M17 12V17H12M6 17H1V12" /></svg>
      </div>
      <div className="absolute right-[14px] top-[60px] flex h-[116px] w-[30px] flex-col items-center rounded-[2px] bg-white shadow-[0_1px_3px_rgba(0,0,0,0.15)]">
        <div className="flex h-[18px] items-center gap-[2px]">
          <i className="size-[4px] rounded-full bg-[#a3a3a3]" />
          <i className="size-[4px] rounded-full bg-[#a3a3a3]" />
          <i className="size-[4px] rounded-full bg-[#a3a3a3]" />
        </div>
        <div className="flex w-[22px] flex-col">
          <div className="flex h-[31px] items-center border-t border-[#cccccc]">
            <svg width="22" height="22" viewBox="0 0 22 22" fill="none" stroke="white" strokeWidth="1">
              <circle cx="11" cy="11" r="11" fill="#9c27b0" stroke="none" />
              <path d="M4 10.500L11 4.500L18 10.500M5.800 9.500V17.500H16.200V9.500" />
              <circle cx="11" cy="10.300" r="1.600" />
              <path d="M8.500 17.500V14Q11 11.500 13.500 14V17.500M11 14V17.500" />
            </svg>
          </div>
          <div className="flex h-[31px] items-center border-t border-[#cccccc]">
            <svg width="22" height="22" viewBox="0 0 22 22" fill="none" stroke="white" strokeWidth="1">
              <circle cx="11" cy="11" r="11" fill="#0b9cf5" stroke="none" />
              <path d="M7 8V4H15.500V18H7V14" />
              <path d="M4 11H9M9 9Q5.500 8.500 5.500 11T9 13ZM13 9.500V12.500" />
            </svg>
          </div>
          <div className="flex h-[31px] items-center border-t border-[#cccccc]">
            <svg width="22" height="22" viewBox="0 0 22 22" fill="none" stroke="white" strokeWidth="1">
              <circle cx="11" cy="11" r="11" fill="#09c2a4" stroke="none" />
              <path d="M5 10V7H11.500V10M3.500 10H5.500V12.500H11V10H13V15.500H3.500ZM5 15.500V17M11.500 15.500V17" />
              <path d="M12.500 9.500Q12.500 5 15.500 5T18.500 9.500ZM15.500 9.500V17M14 17H17.500" />
            </svg>
          </div>
        </div>
      </div>
      <div className="absolute right-[10px] top-[357px] flex h-[81px] w-[40px] flex-col items-center rounded-[2px] bg-white shadow-[0_1px_4px_rgba(0,0,0,0.25)]">
        <svg width="18" height="40" viewBox="0 0 18 40"><path d="M9 11V29M0 20H18" stroke="#666666" strokeWidth="3.600" /></svg>
        <span className="h-px w-[30px] bg-[#e0e0e0]" />
        <svg width="18" height="40" viewBox="0 0 18 40"><path d="M0 20.300H18" stroke="#666666" strokeWidth="3.600" /></svg>
      </div>
      <div className="absolute bottom-0 right-0 flex h-[13px] items-center gap-[12px] bg-[#f5f5f5]/80 pl-[3px] pr-[6px] font-[Roboto] text-[10px] leading-[13px] text-[#1a1a1a]">
        <span>Map data ©2020</span>
        <span>Terms of Use</span>
      </div>
    </div>
  );
}

/* ---------- charts ---------- */

function Rental() {
  const rows: [string, number, number, string][] = [
    ["Entire Home", 1516.7, 500, "#9c27b0"],
    ["Private Room", 1560, 244, "#55bbfb"],
    ["Shared Room", 1603.5, 0, ""],
  ];
  return (
    <Card className="h-[308px]">
      <div className="flex h-[71px] shrink-0 items-center justify-between bg-[#efefef] px-5">
        <span className="text-[22px] font-light text-[#3f51b5]">183 Active Rentals</span>
        <Info className="text-[#7985cb]" />
      </div>
      <CardHeader title="Rental Type" note="67% Entire Home rentals" />
      <svg width="881" height="181" viewBox="20 1489 881 181">
        <path d="M120 1495.500H125.500V1629M328.500 1495V1625M532.500 1495V1625M735.500 1495V1625M120 1625.500H869.500V1629" stroke="#f1f1f1" fill="none" />
        {rows.map(([l, y, w, c]) => (
          <g key={l}>
            <path d={`M120 ${y}H125`} stroke="#f1f1f1" />
            <Label x={116} y={y} anchor="end" size={11.8}>{l}</Label>
            <rect x="125" y={y - 3.5} width="744" height="7" rx="3.500" fill="#ededed" />
            {w > 0 && <rect x="125" y={y - 3.5} width={w} height="7" rx="3.500" fill={c} />}
          </g>
        ))}
        {[0, 50, 100, 150].map((v) => <Label key={v} x={125 + v * 4.07} y={1636}>{v}</Label>)}
      </svg>
    </Card>
  );
}

function Channel() {
  return (
    <Card className="h-[143px]">
      <CardHeader title="Rental Channel" />
      <div className="flex justify-center gap-[30px] pt-[18px]">
        <div className="flex w-[100px] flex-col items-center">
          <div className="flex h-[27px] items-start gap-[3px] text-[#ff5a5f]">
            <FaAirbnb size={21} />
            <svg width="43" height="22" viewBox="0 0 43 22"><text x="0" y="16" fontSize="15" textLength="42" lengthAdjust="spacingAndGlyphs" fill="#ff5a5f" className="font-bold" fontFamily="Open Sans">airbnb</text></svg>
          </div>
          <span className="h-px w-full bg-[#e6e6e6]" />
          <b className="pt-[2px] text-[16px] leading-[24px] font-bold text-[#4f4f4f]">67%</b>
        </div>
        <div className="flex w-[100px] flex-col items-center">
          <div className="flex h-[27px] items-start">
            <svg width="64" height="22" viewBox="0 0 64 22" className="overflow-visible">
              <defs>
                <linearGradient id="vr" x1="0" y1="0" x2="4.200" y2="-.9" gradientUnits="userSpaceOnUse" spreadMethod="repeat">
                  <stop offset="0" stopColor="#17448f" /><stop offset=".45" stopColor="#3f78c8" /><stop offset=".6" stopColor="#e6f1ff" /><stop offset=".8" stopColor="#9cc6f5" /><stop offset="1" stopColor="#3d8be0" />
                </linearGradient>
              </defs>
              <text x="1" y="20" fontSize="27" textLength="61" lengthAdjust="spacingAndGlyphs" fill="url(#vr)" stroke="url(#vr)" strokeWidth=".7" fontStyle="italic" className="font-bold" fontFamily="Liberation Serif">Vrbo</text>
              <path d="M5 3L9 17M8.500 3L11 14" stroke="#e9836b" strokeWidth=".8" />
            </svg>
          </div>
          <span className="h-px w-full bg-[#e6e6e6]" />
          <b className="pt-[2px] text-[16px] leading-[24px] font-bold text-[#4f4f4f]">14%</b>
        </div>
        <div className="flex w-[100px] flex-col items-center">
          <div className="flex h-[27px] items-start text-[14px] leading-[21px] text-[#4f4f4f]">Listed on Both</div>
          <span className="h-px w-full bg-[#e6e6e6]" />
          <b className="pt-[2px] text-[16px] leading-[24px] font-bold text-[#4f4f4f]">19%</b>
        </div>
      </div>
    </Card>
  );
}

function Size() {
  const tops = [2028.6, 1915, 1952.9, 1941.8, 1949, 1987];
  const names = ["Studio", "1", "2", "3", "4", "5+"];
  return (
    <Card className="h-[257px]">
      <CardHeader title="Rental Size" note="2.6 Bedrooms / 6.4 Guests on average" />
      <svg width="881" height="201" viewBox="20 1909 881 201">
        <path d="M70 1915.500H75.500V2045M869.500 2040V2045" stroke="#f1f1f1" fill="none" />
        {[30, 25, 20, 15, 10, 5, 0].map((v, i) => (
          <g key={v}>
            <path d={`M76 ${Math.round(1926 + i * 19) + 0.5}H869`} stroke="#f1f1f1" />
            <Label x={69.5} y={1926.3 + i * 18.9} anchor="end">{v}</Label>
          </g>
        ))}
        {names.map((n, i) => {
          const x = 141.7 + i * 132.25;
          return (
            <g key={n}>
              <rect x={x - 5} y="1915" width="10" height="125" rx="5" fill="#ededed" />
              <rect x={x - 5} y={tops[i]} width="10" height={2040 - tops[i]} rx="5" fill="#3f51b5" />
              <path d={`M${x} 2040V2045`} stroke="#f1f1f1" />
              <Label x={x} y={2053.5} size={11.5}>{n}</Label>
            </g>
          );
        })}
        <Label x={803} y={2067} size={11.500}>Rooms</Label>
      </svg>
    </Card>
  );
}

function Growth() {
  const ys = [2251.8, 2251.4, 2246.8, 2240.7, 2235.7, 2236.1, 2232.5, 2228.9, 2215.4, 2221, 2217.9, 2228.6, 2232.9];
  const qs = ["Q3 '17", "Q4 '17", "Q1 '18", "Q2 '18", "Q3 '18", "Q4 '18", "Q1 '19", "Q2 '19", "Q3 '19", "Q4 '19", "Q1 '20", "Q2 '20", "Q3 '20"];
  const pts = ys.map((y, i) => [101 + i * 61.46, y]);
  const line = smooth(pts);
  return (
    <Card className="h-[255px]">
      <div className="flex h-[70px] shrink-0 items-start justify-between px-5 pt-[18px]">
        <h2 className="text-[16px] leading-[20px] text-[#5c5c5c]">Rental Growth</h2>
        <div className="flex flex-col items-end text-[14px] font-light leading-[20px] text-[#8f8f8f]">
          <span>-5% Quarterly Growth</span>
          <span className="flex items-center gap-[4px]"><Info className="text-[#b5b5b5]" />Jun '17 - Vrbo Data Added</span>
        </div>
      </div>
      <svg width="881" height="185" viewBox="20 2200 881 185">
        <path d="M65 2215.500H70.500V2325M869.500 2320V2325" stroke="#f1f1f1" fill="none" />
        {[250, 200, 150, 100, 50, 0].map((v, i) => (
          <g key={v}>
            <path d={`M${v ? 71 : 66} ${Math.round(2229 + i * 18.2) + 0.5}H869`} stroke="#f1f1f1" />
            <Label x={64.5} y={2229.3 + i * 18.05} anchor="end">{v}</Label>
          </g>
        ))}
        <path d={`${line}V2320H101Z`} fill="#00bf8f" fillOpacity=".05" />
        <path d={line} fill="none" stroke="#00bcd4" strokeWidth="2" />
        {pts.map(([x, y], i) => (
          <g key={i}>
            <circle cx={x} cy={y} r="4.300" fill="#00bcd4" stroke="#37d8a6" strokeWidth="1.400" />
            <path d={`M${x} 2321V2325`} stroke="#f1f1f1" />
            <Label x={x} y={2333.5}>{qs[i].slice(0, 2)}</Label>
            <Label x={x} y={2347}>{qs[i].slice(3)}</Label>
          </g>
        ))}
      </svg>
    </Card>
  );
}

function Amenities() {
  const rows: [string, number, number][] = [
    ["Air Conditioning", 2480.5, 840], ["Heating", 2507.5, 800.5], ["Washer", 2534.5, 785], ["Dryer", 2561.5, 806], ["Kitchen", 2588.5, 747],
    ["Parking", 2615.5, 797], ["Internet", 2642.5, 820.5], ["Cable TV", 2674.5, 302], ["Pool", 2701.5, 500], ["Hot Tub", 2728.5, 237],
  ];
  return (
    <Card className="h-[382px]">
      <CardHeader title="Amenities" />
      <svg width="881" height="326" viewBox="20 2461 881 326">
        <path d="M134 2467.500H140.500V2746M134 2742.500H864.500V2467M285.500 2467V2742M430.500 2467V2742M574.500 2467V2742M719.500 2467V2742" stroke="#f1f1f1" fill="none" />
        {rows.map(([l, y, e]) => (
          <g key={l}>
            <path d={`M134 ${y}H140`} stroke="#f1f1f1" />
            <Label x={131} y={y} anchor="end">{l}</Label>
            <rect x="140" y={y - 3.5} width="724" height="7" rx="3.500" fill="#ededed" />
            <rect x="140" y={y - 3.5} width={e - 140} height="7" rx="3.500" fill="#3f51b5" />
          </g>
        ))}
        {[0, 20, 40, 60, 80, 100].map((v) => <Label key={v} x={140.5 + v * 7.24} y={2753}>{v}%</Label>)}
      </svg>
    </Card>
  );
}

function Ratings() {
  const p: [number, number, string][] = [
    [384, 2900, "#6e5de7"], [433.7, 2930, "#fbb544"], [440.3, 2991.5, "#2196f3"], [384, 3020, "#159a87"], [337.4, 2986, "#0b6ba5"], [332, 2929, "#ff9800"],
  ];
  const edges = ["#fbb544", "#2196f3", "#159a87", "#0b6ba5", "#ff9800", "#6e5de7"];
  const gray = "fill-[#666666]";
  return (
    <Card className="h-[277px]">
      <CardHeader title="Airbnb Ratings" />
      <div className="flex">
        <svg width="481" height="221" viewBox="20 2863 481 221" className="shrink-0">
          <circle cx="384" cy="2959" r="70.300" fill="none" stroke="#f4f4f4" strokeWidth="1.600" />
          {p.map((a, i) => {
            const b = p[(i + 1) % 6];
            return <path key={i} d={`M${a[0]} ${a[1]}L${b[0]} ${b[1]}`} stroke={edges[i]} strokeWidth="1" />;
          })}
          {p.map((a, i) => <circle key={i} cx={a[0]} cy={a[1]} r="4" fill={a[2]} />)}
          <Label x={381.5} y={2877} size={11} className={gray}>Accuracy</Label>
          <Label x={299} y={2919} size={11} className={gray}>Check In</Label>
          <Label x={464} y={2919} size={11} className={gray}>Value</Label>
          <Label x={464} y={3004} size={11} className={gray}>Location</Label>
          <Label x={299} y={3004} size={11} className={gray}>Cleanliness</Label>
          <Label x={381.5} y={3047} size={11} className={gray}>Communication</Label>
        </svg>
        <div className="flex flex-col pl-[18px] pt-[34px] text-[11px] leading-[18px] text-[#666666]">
          <span>Overall Rating:</span>
          <b className="pb-[25px] text-[16px] font-bold text-[#4f4f4f]">4.76</b>
          <span>Rated at Least 4.5 Overall:</span>
          <b className="text-[16px] font-bold text-[#4f4f4f]">87%</b>
        </div>
      </div>
    </Card>
  );
}

function arc(cx: number, cy: number, a: number, b: number) {
  const pt = (r: number, t: number) => `${cx + r * Math.sin((t * Math.PI) / 180)} ${cy - r * Math.cos((t * Math.PI) / 180)}`;
  const big = b - a > 180 ? 1 : 0;
  return `M${pt(80, a)}A80 80 0 ${big} 1 ${pt(80, b)}L${pt(60, b)}A60 60 0 ${big} 0 ${pt(60, a)}Z`;
}

function Activity() {
  const donuts: { cx: number; name: string; segs: [number, number, string][]; labels: [number, number, string][] }[] = [
    {
      cx: 361, name: "Available",
      segs: [[0, 143.6, "#8190f8"], [143.6, 233.7, "#6b7be6"], [233.7, 303.5, "#5967d2"], [303.5, 360, "#3e4fb9"]],
      labels: [[427.5, 3218.7, "40%"], [350.5, 3309.5, "25%"], [291, 3242.5, "19%"], [328, 3178.5, "16%"]],
    },
    {
      cx: 561, name: "Booked",
      segs: [[0, 230.6, "#83cfff"], [230.6, 305, "#56c0ff"], [305, 358.3, "#02aaff"], [358.3, 360, "#83cfff"]],
      labels: [[624.5, 3270.5, "64%"], [491, 3243.5, "21%"], [528, 3178.5, "15%"]],
    },
  ];
  return (
    <Card className="h-[237px]">
      <CardHeader title="Rental Activity" note="35% Available Full Time" info />
      <svg width="881" height="181" viewBox="20 3160 881 181">
        {donuts.map((d) => (
          <g key={d.name}>
            {d.segs.map(([a, b, c]) => <path key={a} d={arc(d.cx, 3241, a, b)} fill={c} stroke="white" strokeWidth="1" />)}
            {d.labels.map(([x, y, t]) => <Label key={t} x={x} y={y} size={9} className="fill-white">{t}</Label>)}
            <Label x={d.cx} y={3244} size={19.5} className="fill-[#666666]">{d.name}</Label>
          </g>
        ))}
      </svg>
    </Card>
  );
}

function Stack({ title, items }: { title: string; items: [string, number, string][] }) {
  return (
    <div className="flex flex-col">
      <span className="h-[18px] text-[12px] leading-[18px] text-[#666666]">{title}</span>
      <div className="flex h-[20px] w-[839px] gap-px">
        {items.map(([t, w, c]) => (
          <div key={t + c} className={"flex shrink items-center justify-center text-[10px] text-white " + c} style={{ width: w }}>{t}</div>
        ))}
      </div>
    </div>
  );
}

function Settings() {
  return (
    <Card className="h-[171px]">
      <CardHeader title="Rental Settings" />
      <div className="flex flex-col gap-[19px] px-5">
        <Stack title="Cancellation Policy" items={[["flexible", 368, "bg-[#65c9b0]"], ["moderate", 222, "bg-[#3f51b5]"], ["strict", 244, "bg-[#ff954d]"], ["", 2, "bg-[#ff9800]"]]} />
        <Stack title="Minimum Stay" items={[["1Night", 373, "bg-[#2196f3]"], ["2", 233, "bg-[#6e5de7]"], ["3", 85, "bg-[#0b6ba5]"], ["4-6", 71, "bg-[#3f51b5]"], ["7-29", 53, "bg-[#ff9800]"], ["", 19, "bg-[#65c9b0]"]]} />
      </div>
    </Card>
  );
}

export default function App() {
  return (
    <div className="flex h-[3552px] w-[929px] overflow-hidden bg-[#f0f3fd] font-['Open_Sans',sans-serif]">
      <div className="flex w-[921px] flex-col border-l border-[#e1e5f3]">
        <Header />
        <div className="-ml-px flex flex-1 flex-col pl-5">
          <div className="flex h-[80px] items-start pt-5">
            <Select text="Frisco" />
            <div className="w-[18px]" />
            <Select text="All Neighborhoods / Zip Codes" />
            <button className="ml-[27px] h-[40px] w-[95px] rounded bg-[#00c4a7] text-[14px] font-bold text-white">Purchase</button>
          </div>
          <div className="flex w-[881px] flex-col">
            <MarketGrade />
            <div className="mb-5 mt-5 flex gap-[15px]">
              {metrics.map((m) => <MetricCard key={m.title} m={m} />)}
            </div>
            <MapPanel />
            <div className="flex flex-col gap-5 pt-5">
              <Rental />
              <Channel />
              <Size />
              <Growth />
              <Amenities />
              <Ratings />
              <Activity />
              <Settings />
            </div>
          </div>
        </div>
      </div>
      <div className="flex w-[8px] flex-col bg-[#f5f6fc]">
        <div className="h-[222px] rounded-full bg-[#c6c7ca]" />
        <div className="mt-[888px] h-[222px] rounded-full bg-[#c6c7ca]" />
        <div className="mt-[888px] h-[222px] rounded-full bg-[#c6c7ca]" />
        <div className="mt-[888px] h-[222px] rounded-full bg-[#c6c7ca]" />
      </div>
    </div>
  );
}
